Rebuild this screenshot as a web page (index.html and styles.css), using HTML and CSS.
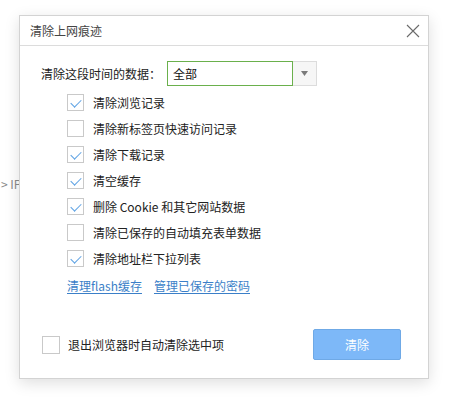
FILE: index.html
```html
<!DOCTYPE html>
<html>
<head>
<meta charset="utf-8">
<link rel="stylesheet" href="styles.css">
</head>
<body>
<div class="behind">&gt; IP</div>
<div class="dialog">
  <div class="header">
    <span class="title">清除上网痕迹</span>
    <svg class="close" width="14" height="14" viewBox="0 0 14 14"><path d="M1 1L13 13M13 1L1 13" stroke="#6a6a6a" stroke-width="1.1" fill="none"/></svg>
  </div>
  <div class="body">
    <div class="range">
      <span class="range-label">清除这段时间的数据：</span>
      <div class="select">
        <span class="select-value">全部</span>
        <span class="select-arrow"><svg width="7" height="5" viewBox="0 0 7 5"><path d="M0 0H7L3.5 5Z" fill="#7a7a7a"/></svg></span>
      </div>
    </div>
    <ul class="options">
      <li class="opt"><span class="box checked"></span>清除浏览记录</li>
      <li class="opt"><span class="box"></span>清除新标签页快速访问记录</li>
      <li class="opt"><span class="box checked"></span>清除下载记录</li>
      <li class="opt"><span class="box checked"></span>清空缓存</li>
      <li class="opt"><span class="box checked"></span>删除 Cookie 和其它网站数据</li>
      <li class="opt"><span class="box"></span>清除已保存的自动填充表单数据</li>
      <li class="opt"><span class="box checked"></span>清除地址栏下拉列表</li>
    </ul>
    <div class="links">
      <a class="link">清理flash缓存</a>
      <a class="link">管理已保存的密码</a>
    </div>
    <div class="footer">
      <label class="auto"><span class="box big"></span>退出浏览器时自动清除选中项</label>
      <button class="btn">清除</button>
    </div>
  </div>
</div>
</body>
</html>
```
FILE: styles.css
```css
html, body {
  margin: 0;
  padding: 0;
  background: #fff;
}
body {
  position: relative;
  width: 456px;
  height: 397px;
  overflow: hidden;
  font-family: "Microsoft YaHei", "Noto Sans CJK SC", sans-serif;
  font-size: 12px;
  color: #333;
}
.behind {
  position: absolute;
  left: 1px;
  top: 176px;
  color: #8a8a8a;
  font-size: 12px;
  line-height: 16px;
}
.dialog {
  position: absolute;
  left: 19px;
  top: 15px;
  width: 410px;
  height: 364px;
  box-sizing: border-box;
  border: 1px solid #d3d3d3;
  background: #fff;
  box-shadow: 0 4px 14px rgba(0, 0, 0, 0.13);
  display: flex;
  flex-direction: column;
}
.header {
  height: 30px;
  box-sizing: border-box;
  border-bottom: 1px solid #dcdcdc;
  display: flex;
  align-items: center;
  justify-content: space-between;
  padding: 0 8px 0 10px;
  background: #fff;
}
.title {
  font-size: 12px;
  color: #444;
  line-height: 16px;
}
.close {
  display: block;
}
.body {
  flex: 1;
  display: flex;
  flex-direction: column;
  padding: 15px 27px 18px 21px;
}
.range {
  display: flex;
  align-items: center;
  height: 25px;
}
.range-label {
  width: 126px;
  line-height: 16px;
  color: #222;
}
.select {
  display: flex;
  height: 25px;
  width: 150px;
  box-sizing: border-box;
}
.select-value {
  flex: 1;
  border: 1px solid #6ab04c;
  display: flex;
  align-items: center;
  padding-left: 5px;
  color: #111;
}
.select-arrow {
  width: 24px;
  box-sizing: border-box;
  border: 1px solid #dcdcdc;
  border-left: none;
  background: #f6f6f6;
  display: flex;
  align-items: center;
  justify-content: center;
}
.options {
  list-style: none;
  margin: 3px 0 0 26px;
  padding: 0;
}
.opt {
  height: 26px;
  display: flex;
  align-items: center;
  color: #222;
}
.box {
  width: 17px;
  height: 17px;
  box-sizing: border-box;
  border: 1px solid #c9c9c9;
  background: #fff;
  margin-right: 9px;
  position: relative;
  flex: none;
}
.box.checked::after {
  content: "";
  position: absolute;
  left: 4px;
  top: 2px;
  width: 9px;
  height: 5px;
  border-left: 1px solid #5ea2e4;
  border-bottom: 1px solid #5ea2e4;
  transform: translate(-1px, 2px) rotate(-45deg) skewX(0deg);
  transform-origin: center;
}
.box.big {
  width: 18px;
  height: 18px;
}
.links {
  margin: 4px 0 0 26px;
  height: 20px;
  display: flex;
  align-items: center;
  gap: 12px;
}
.link {
  color: #3b7fc8;
  text-decoration: underline;
  text-underline-offset: 2px;
  cursor: pointer;
}
.footer {
  margin-top: auto;
  display: flex;
  align-items: center;
  justify-content: space-between;
  padding-left: 1px;
}
.auto {
  display: flex;
  align-items: center;
  color: #222;
}
.auto .box {
  margin-right: 8px;
}
.btn {
  width: 88px;
  height: 31px;
  border: 1px solid #6fa9e6;
  border-radius: 2px;
  background: #7db8f8;
  color: #fff;
  font-family: inherit;
  font-size: 12px;
  padding: 0;
}
```
